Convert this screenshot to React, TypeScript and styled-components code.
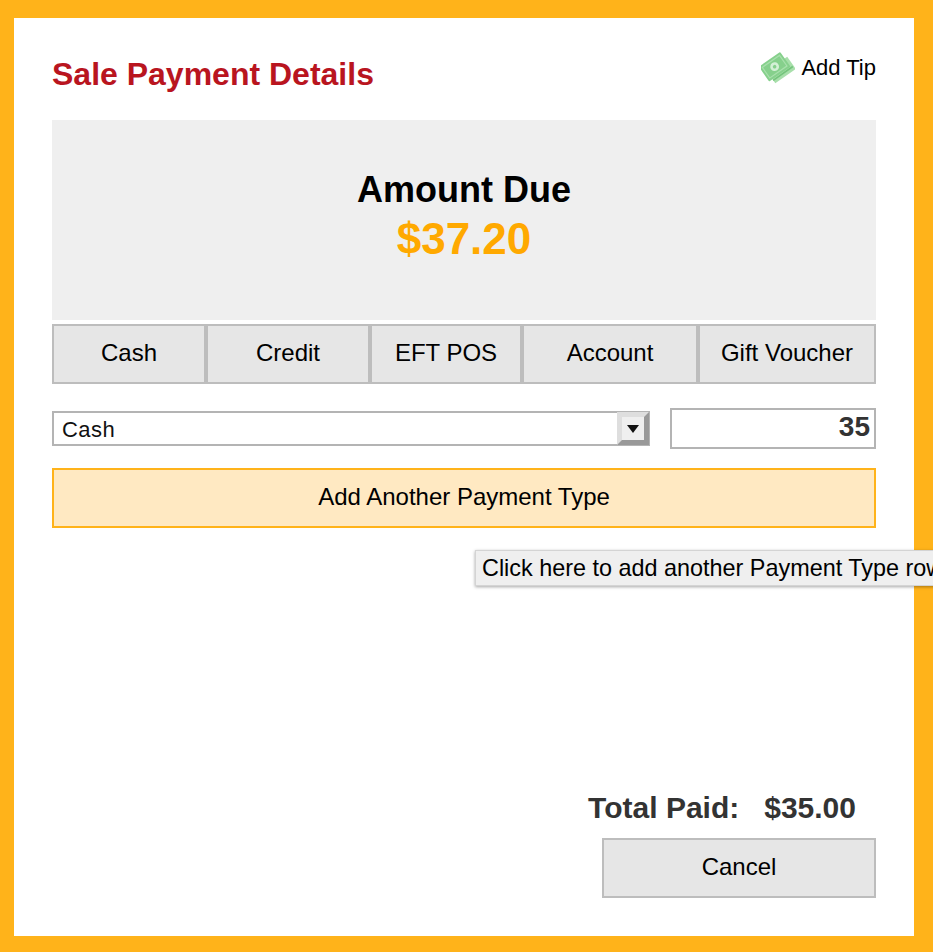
import React from "react";
import styled, { createGlobalStyle } from "styled-components";

const Global = createGlobalStyle`
  html, body { margin: 0; padding: 0; background: #fff; }
  body { font-family: "Liberation Sans", Arial, sans-serif; color: #000; }
  * { box-sizing: border-box; }
`;
const Page = styled.div`
  width: 933px; height: 952px; overflow: hidden;
`;
const Frame = styled.div`
  width: 933px; height: 952px; position: relative;
  border: solid #ffb31a; border-width: 18px 19px 16px 14px; background: #fff;
  padding: 0 38px 0 38px; display: flex; flex-direction: column;
`;
const Header = styled.div`
  height: 102px; display: flex; justify-content: space-between; align-items: flex-start;
`;
const Title = styled.h1`
  margin: 38px 0 0; font-size: 32px; line-height: 36px; font-weight: 700; color: #b9151f;
`;
const TipLink = styled.div`
  margin-top: 33px; display: flex; align-items: center; gap: 6px; font-size: 22px; line-height: 32px;
`;
const Due = styled.div`
  height: 200px; background: #efefef; display: flex; flex-direction: column; align-items: center; padding-top: 48px;
`;
const DueLabel = styled.div`font-size: 36px; line-height: 44px; font-weight: 700;`;
const DueValue = styled.div`font-size: 44px; line-height: 54px; font-weight: 700; color: #ffa900;`;
const Tabs = styled.div`
  margin-top: 4px; display: flex; height: 60px;
`;
const Tab = styled.div<{ $w: number }>`
  width: ${p => p.$w}px; border: 2px solid #bdbdbd; background: #e6e6e6; padding-bottom: 2px;
  display: flex; align-items: center; justify-content: center; font-size: 24px;
`;
const Row = styled.div`
  margin-top: 24px; display: flex; justify-content: space-between; align-items: flex-start;
`;
const Select = styled.div`
  margin-top: 3px; width: 598px; height: 35px; border: 2px solid #b4b4b4; display: flex; justify-content: space-between;
  align-items: stretch; font-size: 22px; letter-spacing: .45px; padding-left: 8px; line-height: 33px; color: #111;
`;
const Arrow = styled.div`
  width: 32px; margin: -1px -1px -1px 0; background: #efefef; border: 5px solid; border-color: #dedede #999 #999 #dedede;
  display: flex; align-items: center; justify-content: center;
`;
const Amount = styled.div`
  width: 206px; height: 41px; border: 2px solid #b4b4b4; text-align: right; padding-right: 4px;
  font-size: 28px; line-height: 33px; font-weight: 700; color: #333;
`;
const AddButton = styled.div`
  margin-top: 19px; height: 60px; background: #ffe9c2; border: 2px solid #ffb31a; padding-bottom: 2px;
  display: flex; align-items: center; justify-content: center; font-size: 24px;
`;
const Tooltip = styled.div`
  position: absolute; left: 461px; top: 532px; width: 520px; height: 36px; background: #efefef;
  border: 1px solid #d4d4d4; box-shadow: 0 1px 3px rgba(0,0,0,.35); padding-left: 6px;
  font-size: 23.4px; line-height: 35px; white-space: nowrap;
`;
const Footer = styled.div`
  margin-top: auto; padding-bottom: 38px; display: flex; flex-direction: column; align-items: flex-end;
`;
const Total = styled.div`
  display: flex; gap: 25px; padding-right: 20px; font-size: 30px; line-height: 38px; font-weight: 700; color: #333;
`;
const Cancel = styled.div`
  margin-top: 11px; width: 274px; height: 60px; background: #e6e6e6; border: 2px solid #bdbdbd; padding-bottom: 2px;
  display: flex; align-items: center; justify-content: center; font-size: 24px;
`;

const Money = () => (
  <svg width="34" height="34" viewBox="0 0 34 34">
    <g transform="rotate(-35 17 17)">
      <rect x="6" y="13" width="25" height="15" fill="#a8dfab" />
      <rect x="6" y="23.5" width="24" height="1.6" fill="#74c47c" />
      <rect x="2" y="5" width="26" height="18" rx="1" fill="#86d08c" />
      <rect x="4.5" y="7.5" width="21" height="13" fill="none" stroke="#a9e0ad" strokeWidth="1.2" />
      <circle cx="15" cy="14" r="4.4" fill="#d4f0d6" />
      <circle cx="15" cy="14" r="1.8" fill="#86d08c" />
    </g>
  </svg>
);

const tabs: [string, number][] = [["Cash", 154], ["Credit", 164], ["EFT POS", 152], ["Account", 176], ["Gift Voucher", 178]];

export default function App() {
  return (
    <Page>
      <Global />
      <Frame>
        <Header>
          <Title>Sale Payment Details</Title>
          <TipLink><Money />Add Tip</TipLink>
        </Header>
        <Due>
          <DueLabel>Amount Due</DueLabel>
          <DueValue>$37.20</DueValue>
        </Due>
        <Tabs>
          {tabs.map(([t, w]) => <Tab key={t} $w={w}>{t}</Tab>)}
        </Tabs>
        <Row>
          <Select>
            Cash
            <Arrow>
              <svg width="12" height="8" viewBox="0 0 12 8"><path d="M0 0h12L6 8z" fill="#111" /></svg>
            </Arrow>
          </Select>
          <Amount>35</Amount>
        </Row>
        <AddButton>Add Another Payment Type</AddButton>
        <Tooltip>Click here to add another Payment Type row</Tooltip>
        <Footer>
          <Total><span>Total Paid:</span><span>$35.00</span></Total>
          <Cancel>Cancel</Cancel>
        </Footer>
      </Frame>
    </Page>
  );
}
